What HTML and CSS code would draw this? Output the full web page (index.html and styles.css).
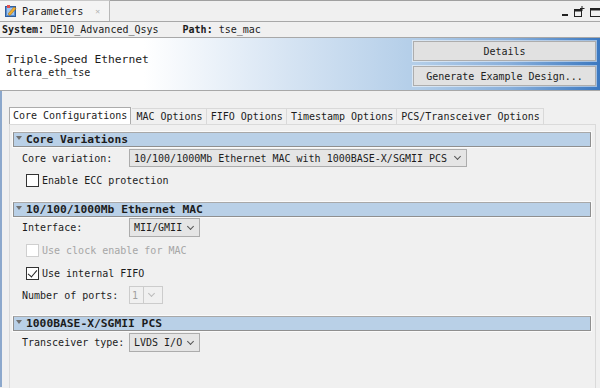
FILE: index.html
```html
<!DOCTYPE html>
<html lang="en">
<head>
  <meta charset="UTF-8">
  <title>Parameters</title>
  <link rel="stylesheet" href="styles.css">
</head>
<body>
  <div class="view-bar">
    <div class="view-tab">
      <svg class="view-icon" width="12" height="12" viewBox="0 0 12 12">
        <rect x="0.5" y="1.5" width="10" height="10" fill="#5b8fd0" stroke="#2f5f9e"/>
        <rect x="2" y="3" width="7" height="7" fill="#9cc3ee"/>
        <path d="M3 9 L9 2 L11 3.5 L5 10.5 Z" fill="#f0b030" stroke="#b07010" stroke-width="0.6"/>
        <path d="M2 0 L5 0 L5 3 L2 3 Z" fill="#e05050"/>
      </svg>
      <span class="view-title">Parameters</span>
      <span class="view-close">✕</span>
    </div>
    <div class="win-ctl">
      <svg width="8" height="8" viewBox="0 0 8 8"><rect x="1" y="5" width="6" height="2" fill="#222"/></svg>
      <svg width="11" height="11" viewBox="0 0 11 11"><rect x="0.5" y="3.5" width="7" height="7" fill="none" stroke="#222"/><rect x="0.5" y="3.5" width="7" height="2" fill="#222"/><path d="M8 0 V5 M6 2.5 H10.5" stroke="#222"/></svg>
      <svg width="11" height="11" viewBox="0 0 11 11"><rect x="0.5" y="2.5" width="10" height="8" fill="none" stroke="#222"/><rect x="0.5" y="2.5" width="10" height="2" fill="#222"/></svg>
    </div>
  </div>

  <div class="path-bar">
    <span><b>System:</b> DE10_Advanced_Qsys</span>
    <span><b>Path:</b> tse_mac</span>
  </div>

  <header class="comp-header">
    <div class="comp-name">
      <div class="comp-title">Triple-Speed Ethernet</div>
      <div class="comp-id">altera_eth_tse</div>
    </div>
    <div class="comp-actions">
      <button class="btn">Details</button>
      <button class="btn">Generate Example Design...</button>
    </div>
  </header>

  <main class="editor">
    <nav class="tabs">
      <span class="tab active">Core Configurations</span>
      <span class="tab">MAC Options</span>
      <span class="tab">FIFO Options</span>
      <span class="tab">Timestamp Options</span>
      <span class="tab">PCS/Transceiver Options</span>
    </nav>

    <section class="panel">
      <div class="group-bar"><span class="caret"></span>Core Variations</div>
      <div class="row r-core">
        <span class="label">Core variation:</span>
        <span class="combo w-core">10/100/1000Mb Ethernet MAC with 1000BASE-X/SGMII PCS<i class="chev"></i></span>
      </div>
      <label class="check r-ecc"><span class="box"></span>Enable ECC protection</label>

      <div class="group-bar g-mac"><span class="caret"></span>10/100/1000Mb Ethernet MAC</div>
      <div class="row r-iface">
        <span class="label">Interface:</span>
        <span class="combo w-short">MII/GMII<i class="chev"></i></span>
      </div>
      <label class="check disabled r-clk"><span class="box"></span>Use clock enable for MAC</label>
      <label class="check r-fifo"><span class="box checked"></span>Use internal FIFO</label>
      <div class="row r-ports">
        <span class="label">Number of ports:</span>
        <span class="combo disabled w-ports"><span class="val">1</span><i class="chev"></i></span>
      </div>

      <div class="group-bar g-pcs"><span class="caret"></span>1000BASE-X/SGMII PCS</div>
      <div class="row r-xcvr">
        <span class="label">Transceiver type:</span>
        <span class="combo w-short">LVDS I/O<i class="chev"></i></span>
      </div>
    </section>
  </main>
</body>
</html>
```

FILE: styles.css
```css
* {
  box-sizing: border-box;
  margin: 0;
  padding: 0;
}

body {
  width: 600px;
  height: 388px;
  overflow: hidden;
  background: #f0f0f0;
  color: #1c1c1c;
  font-family: "DejaVu Sans Mono", "Liberation Mono", monospace;
  font-size: 10px;
}

/* view tab strip */
.view-bar {
  height: 22px;
  display: flex;
  justify-content: space-between;
  border-bottom: 1px solid #a8a8a8;
  background: linear-gradient(#a0a0a0, #a0a0a0) no-repeat 0 0 / 100% 1px, #f0f0f0;
}

.view-tab {
  width: 110px;
  display: flex;
  align-items: center;
  padding-left: 5px;
  background: #f4f4f4;
  border-right: 1px solid #b8b8b8;
  border-top: 1px solid #c8c8c8;
}

.view-title {
  margin-left: 5px;
  font-size: 10.2px;
}

.view-close {
  margin-left: 12px;
  color: #b0b0b0;
  font-size: 8px;
}

.win-ctl {
  display: flex;
  align-items: flex-end;
  gap: 5px;
  padding: 0 0 4px;
  margin-right: -1px;
}

.path-bar {
  height: 16px;
  display: flex;
  gap: 24px;
  align-items: center;
  padding-left: 2px;
  border-bottom: 1px solid #a8a8a8;
}

.path-bar b {
  font-weight: bold;
}

/* component header */
.comp-header {
  height: 53px;
  display: flex;
  justify-content: space-between;
  padding: 3px 4px 0 6px;
  background: linear-gradient(90deg, #ffffff 0%, #ffffff 24%, #d6e4f3 48%, #b2cde8 70%, #88afdb 85%, #3b78c0 100%);
  border-bottom: 1px solid #a8a8a8;
}

.comp-name {
  padding-top: 12px;
}

.comp-title {
  font-size: 11.3px;
  line-height: 14px;
}

.comp-id {
  line-height: 12px;
}

.comp-actions {
  display: flex;
  flex-direction: column;
  gap: 5px;
}

.btn {
  width: 183px;
  height: 20px;
  font: inherit;
  color: #222;
  background: #e1e1e1;
  border: 1px solid #adadad;
  box-shadow: 0 0 0 1px rgba(255, 255, 255, 0.5);
}

/* editor */
.editor {
  border-left: 2px solid #8ca8cc;
  padding: 16px 4px 0 7px;
  height: 296px;
}

.tabs {
  display: flex;
  align-items: flex-end;
  height: 17px;
}

.tab {
  height: 16px;
  line-height: 15px;
  padding: 0 3px 0 4px;
  border: 1px solid #d9d9d9;
  border-bottom: none;
  border-left: none;
}

.tab.active {
  height: 17px;
  background: #fff;
  border: 1px solid #acacac;
  border-bottom: none;
  padding: 0 3px;
  margin-right: 1px;
}

.panel {
  height: 280px;
  border: 1px solid #dadada;
  border-bottom: none;
  padding: 7px 4px 0 3px;
}

.group-bar {
  height: 15px;
  display: flex;
  align-items: center;
  font-size: 11.3px;
  font-weight: bold;
  background: #b9d0e7;
  border: 1px solid #8f8f8f;
  border-top-color: #a8a8a8;
  box-shadow: 0 0 0 1px #fafafa;
  padding-left: 2px;
  line-height: 13px;
}

.caret {
  width: 0;
  height: 0;
  border-left: 3px solid transparent;
  border-right: 3px solid transparent;
  border-top: 4px solid #707070;
  margin: 0 4px 3px 0;
}

.row {
  display: flex;
  align-items: center;
  padding-left: 9px;
}

.label {
  width: 107px;
}

.combo {
  height: 18px;
  display: flex;
  align-items: center;
  justify-content: space-between;
  padding: 0 4px 0 4px;
  background: #e5e5e5;
  border: 1px solid #acacac;
}

.w-core { width: 338px; }
.w-short { width: 71px; height: 19px; }
.w-ports { width: 34px; }

.chev {
  width: 5px;
  height: 5px;
  border-right: 1px solid #555;
  border-bottom: 1px solid #555;
  transform: rotate(45deg);
  margin: 0 2px 3px 0;
}

.combo.disabled {
  background: #f0f0f0;
  border-color: #cccccc;
  color: #a0a0a0;
  padding: 0;
}

.combo.disabled .val {
  width: 14px;
  height: 100%;
  padding-left: 2px;
  line-height: 17px;
  border-right: 1px solid #cccccc;
}

.combo.disabled .chev {
  border-color: #bbb;
  margin-right: 8px;
}

.check {
  height: 14px;
  display: flex;
  align-items: center;
  padding-left: 13px;
  gap: 3px;
}

.box {
  width: 13px;
  height: 13px;
  background: #fff;
  border: 1px solid #333;
  position: relative;
}

.box.checked::after {
  content: "";
  position: absolute;
  left: 3px;
  top: 0;
  width: 4px;
  height: 8px;
  border-right: 1.5px solid #222;
  border-bottom: 1.5px solid #222;
  transform: rotate(40deg);
}

.check.disabled {
  color: #a6a6a6;
}

.check.disabled .box {
  border-color: #cfcfcf;
}

.r-core { margin-top: 2px; }
.r-ecc { margin-top: 6px; }
.g-mac { margin-top: 15px; }
.r-iface { margin-top: 1px; }
.r-clk { margin-top: 6px; }
.r-fifo { margin-top: 9px; }
.r-ports { margin-top: 6px; }
.g-pcs { margin-top: 12px; }
.r-xcvr { margin-top: 2px; }
```
